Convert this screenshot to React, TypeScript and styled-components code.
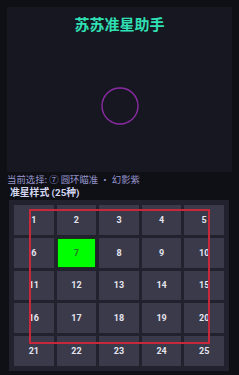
import { createGlobalStyle } from "styled-components";
import styled from "styled-components";

const GlobalStyle = createGlobalStyle`
  html, body {
    margin: 0;
    padding: 0;
    background: #0f0f16;
  }
  body {
    font-family: "Roboto", "Noto Sans CJK SC", sans-serif;
  }
`;

const Page = styled.div`
  width: 239px;
  height: 375px;
  box-sizing: border-box;
  padding: 7px 7px 0;
  display: flex;
  flex-direction: column;
  overflow: hidden;
`;

const Canvas = styled.div`
  height: 165px;
  background: #171721;
  display: flex;
  flex-direction: column;
  align-items: center;
`;

const Title = styled.h1`
  margin: 0;
  padding-top: 7px;
  font-size: 15px;
  line-height: 20px;
  font-weight: 700;
  color: #2fe0b4;
  font-family: "Noto Sans CJK SC", sans-serif;
`;

const Reticle = styled.svg`
  margin-top: 53px;
  display: block;
`;

const Status = styled.div`
  font-size: 9.4px;
  line-height: 14px;
  color: #9595cc;
  white-space: nowrap;
  font-family: "Noto Sans CJK SC", sans-serif;
`;

const Heading = styled.div`
  padding-left: 3px;
  font-size: 9.8px;
  line-height: 14px;
  font-weight: 700;
  color: #d4d7f2;
  font-family: "Roboto", "Noto Sans CJK SC", sans-serif;
`;

const GridBox = styled.div`
  position: relative;
  margin: 0 3px 0 2px;
  padding: 5px 5px 5px;
  background: #22222e;
  display: grid;
  grid-template-columns: repeat(5, 1fr);
  grid-auto-rows: 29.75px;
  gap: 3px;
`;

const Cell = styled.div<{ $active?: boolean }>`
  display: flex;
  align-items: center;
  justify-content: center;
  box-sizing: border-box;
  background: ${({ $active }) => ($active ? "#00ff00" : "#3a3a4a")};
  border: ${({ $active }) => ($active ? "1px solid #1b331b" : "none")};
  color: ${({ $active }) => ($active ? "#237a23" : "#e4e4ee")};
  font-size: 9px;
  font-weight: 700;
`;

const Frame = styled.div`
  position: absolute;
  left: 20px;
  top: 9px;
  width: 181px;
  height: 135px;
  box-sizing: border-box;
  border: 2px solid #c8283a;
  z-index: 2;
  pointer-events: none;
`;

export default function App() {
  const cells = Array.from({ length: 25 }, (_, i) => i + 1);
  return (
    <>
      <GlobalStyle />
      <Page>
        <Canvas>
          <Title>苏苏准星助手</Title>
          <Reticle width="38" height="38" viewBox="0 0 38 38">
            <circle cx="19" cy="19" r="18" fill="none" stroke="#8a2ba4" strokeWidth="1.4" />
          </Reticle>
        </Canvas>
        <Status>当前选择: ⑦ 圆环瞄准 · 幻影紫</Status>
        <Heading>准星样式 (25种)</Heading>
        <GridBox>
          {cells.map((n) => (
            <Cell key={n} $active={n === 7}>
              {n}
            </Cell>
          ))}
          <Frame />
        </GridBox>
      </Page>
    </>
  );
}
